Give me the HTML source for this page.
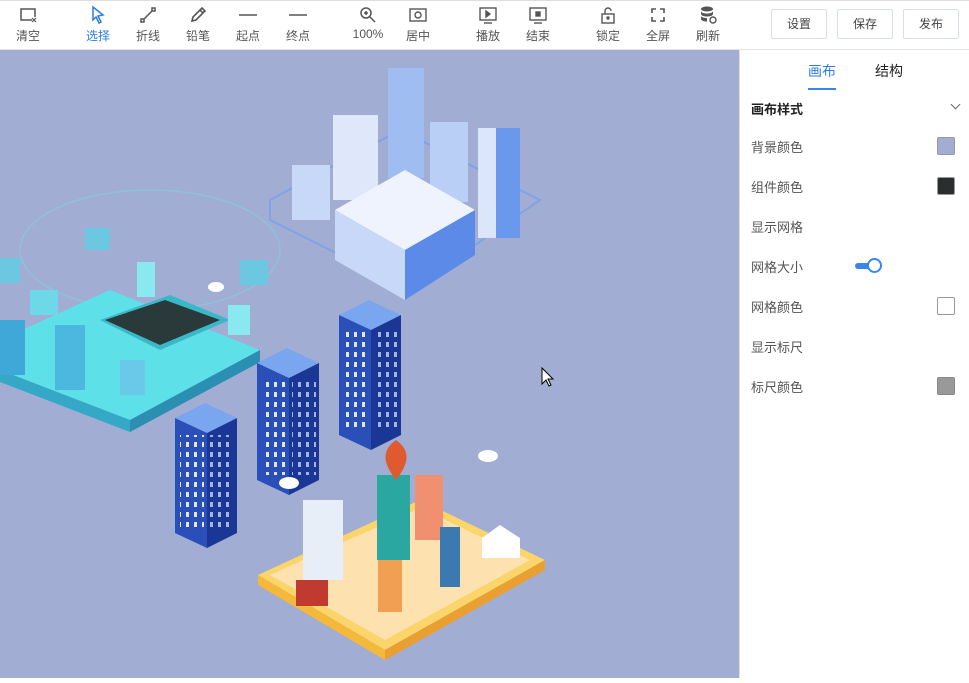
<!DOCTYPE html>
<html><head><meta charset="utf-8"><style>
*{margin:0;padding:0;box-sizing:border-box}
body{width:969px;height:678px;overflow:hidden;font-family:"Liberation Sans","Noto Sans CJK SC",sans-serif;background:#fff;position:relative}
.top{position:absolute;left:0;top:0;width:969px;height:50px;background:#fff;border-bottom:1px solid #e4e4e4;border-top:1px solid #ddd}
.tb{position:absolute;top:4px;width:50px;text-align:center;font-size:12px;color:#555}
.tb svg{display:block;margin:0 auto 2px;width:20px;height:20px}
.tb.act{color:#2b7de9}
.btn{position:absolute;top:8px;width:56px;height:30px;border:1px solid #d8dde6;border-radius:2px;font-size:12px;color:#444;text-align:center;line-height:28px}
.canvas{position:absolute;left:0;top:50px;width:739px;height:628px;background:#a2add3}
.panel{position:absolute;left:739px;top:50px;width:230px;height:628px;background:#fff;border-left:1px solid #e0e0e0}
.tab{position:absolute;top:11px;font-size:14px;color:#222}
.row{position:absolute;left:11px;font-size:13px;color:#555}
.sw{position:absolute;left:197px;width:18px;height:18px;border-radius:2px;border:1px solid #999}
</style></head><body>
<div class="top">
<div class="tb" style="left:3px"><svg viewBox="0 0 20 20" fill="none" stroke="#555" stroke-width="1.5"><path d="M14 15H3V4h14v8"/><path d="M14 13l4 4M18 13l-4 4" stroke-width="1.2"/></svg>清空</div>
<div class="tb act" style="left:73px"><svg viewBox="0 0 20 20" fill="none" stroke="#2b7de9" stroke-width="1.5"><path d="M5 2l10 8-5 1 3 6-2 1-3-6-3 3z"/></svg>选择</div>
<div class="tb" style="left:123px"><svg viewBox="0 0 20 20" fill="none" stroke="#555" stroke-width="1.5"><rect x="3" y="14" width="3" height="3"/><rect x="14" y="3" width="3" height="3"/><path d="M6 14l8-8"/></svg>折线</div>
<div class="tb" style="left:173px"><svg viewBox="0 0 20 20" fill="none" stroke="#555" stroke-width="1.6"><path d="M4 16l1-4 9-9 3 3-9 9z M12 5l3 3"/></svg>铅笔</div>
<div class="tb" style="left:223px"><svg viewBox="0 0 20 20" stroke="#555" stroke-width="1.5"><path d="M1 10h18"/></svg>起点</div>
<div class="tb" style="left:273px"><svg viewBox="0 0 20 20" stroke="#555" stroke-width="1.5"><path d="M1 10h18"/></svg>终点</div>
<div class="tb" style="left:343px"><svg viewBox="0 0 20 20" fill="none" stroke="#555" stroke-width="1.5"><circle cx="8" cy="8" r="5"/><path d="M12 12l5 5M6 8h4M8 6v4"/></svg>100%</div>
<div class="tb" style="left:393px"><svg viewBox="0 0 20 20" fill="none" stroke="#555" stroke-width="1.4"><rect x="2" y="4" width="16" height="12"/><circle cx="10" cy="10" r="3"/></svg>居中</div>
<div class="tb" style="left:463px"><svg viewBox="0 0 20 20" fill="none" stroke="#555" stroke-width="1.4"><rect x="2" y="3" width="16" height="12"/><path d="M8 6l4 3-4 3z" fill="#555"/><path d="M6 18h8"/></svg>播放</div>
<div class="tb" style="left:513px"><svg viewBox="0 0 20 20" fill="none" stroke="#555" stroke-width="1.4"><rect x="2" y="3" width="16" height="12"/><rect x="8" y="7" width="4" height="4" fill="#555"/><path d="M6 18h8"/></svg>结束</div>
<div class="tb" style="left:583px"><svg viewBox="0 0 20 20" fill="none" stroke="#555" stroke-width="1.4"><rect x="4" y="9" width="12" height="9"/><path d="M7 9V6a3 3 0 016 0"/><circle cx="10" cy="13" r="1" fill="#555"/></svg>锁定</div>
<div class="tb" style="left:633px"><svg viewBox="0 0 20 20" fill="none" stroke="#555" stroke-width="1.6"><path d="M4 8V4h4M12 4h4v4M16 12v4h-4M8 16H4v-4"/></svg>全屏</div>
<div class="tb" style="left:683px"><svg viewBox="0 0 20 20" fill="#555"><ellipse cx="9" cy="4" rx="6" ry="2.5"/><path d="M3 6v3c0 1.5 3 2.5 6 2.5s6-1 6-2.5V6c0 1.5-3 2.5-6 2.5S3 7.5 3 6zM3 11v3c0 1.5 3 2.5 6 2.5V13c-3 0-6-1-6-2z"/><circle cx="15" cy="15" r="3" fill="none" stroke="#555" stroke-width="1.4"/></svg>刷新</div>
<div class="btn" style="left:771px">设置</div>
<div class="btn" style="left:837px">保存</div>
<div class="btn" style="left:903px">发布</div>
</div>
<div class="canvas">
<svg width="739" height="628" viewBox="0 50 739 628">
<defs><pattern id="win" width="8" height="10" patternUnits="userSpaceOnUse"><rect x="2" y="2" width="3" height="5" fill="#dfe8ff"/></pattern></defs>
<ellipse cx="150" cy="250" rx="130" ry="60" fill="none" stroke="#7fd0e0" stroke-width="1.5" opacity=".6"/>
<polygon points="0,340 110,290 260,350 130,420 0,370" fill="#5de0e8"/>
<polygon points="0,370 130,420 130,432 0,382" fill="#35a8c8"/>
<polygon points="130,420 260,350 260,362 130,432" fill="#2a8fb0"/>
<polygon points="100,320 170,295 230,320 160,350" fill="#3ab8c8"/>
<polygon points="105,320 165,300 220,320 160,345" fill="#2a3a3a"/>
<rect x="0" y="320" width="25" height="55" fill="#3fa8d8"/>
<rect x="55" y="325" width="30" height="65" fill="#4cb8e0"/>
<rect x="120" y="360" width="25" height="35" fill="#6ac8e8"/>
<rect x="85" y="228" width="25" height="22" fill="#6cc8e0"/>
<rect x="240" y="260" width="28" height="25" fill="#6cc8e0"/>
<rect x="0" y="258" width="20" height="25" fill="#6cc8e0"/>
<rect x="137" y="262" width="18" height="35" fill="#8ae8f0"/>
<rect x="228" y="305" width="22" height="30" fill="#8ae8f0"/>
<rect x="30" y="290" width="28" height="25" fill="#6cd8e8"/>
<polygon points="270,200 400,130 540,200 410,290 270,220" fill="none" stroke="#6f9ef0" stroke-width="2" opacity=".7"/>
<rect x="388" y="68" width="36" height="110" fill="#9fbdf0"/>
<rect x="333" y="115" width="45" height="85" fill="#dfe8fb"/>
<rect x="430" y="122" width="38" height="80" fill="#b9cff5"/>
<rect x="478" y="128" width="42" height="110" fill="#dce6fb"/>
<rect x="496" y="128" width="24" height="110" fill="#6a98ec"/>
<rect x="292" y="165" width="38" height="55" fill="#c8d8f8"/>
<polygon points="335,210 405,170 475,210 405,250" fill="#eef3fd"/>
<polygon points="335,210 405,250 405,300 335,260" fill="#c8d8f8"/>
<polygon points="405,250 475,210 475,255 405,300" fill="#5b8ae8"/>
<g>
<polygon points="175,418 205,403 237,418 207,433" fill="#7aa6f0"/>
<polygon points="175,418 207,433 207,548 175,533" fill="#2a4fb8"/>
<polygon points="207,433 237,418 237,533 207,548" fill="#1a3795"/>
<rect x="180" y="435" width="24" height="95" fill="url(#win)"/>
<rect x="210" y="435" width="24" height="95" fill="url(#win)" opacity=".7"/>
<polygon points="257,363 287,348 319,363 289,378" fill="#7aa6f0"/>
<polygon points="257,363 289,378 289,495 257,480" fill="#2a4fb8"/>
<polygon points="289,378 319,363 319,480 289,495" fill="#1a3795"/>
<rect x="262" y="380" width="24" height="95" fill="url(#win)"/>
<rect x="292" y="380" width="24" height="95" fill="url(#win)" opacity=".7"/>
<polygon points="339,315 369,300 401,315 371,330" fill="#7aa6f0"/>
<polygon points="339,315 371,330 371,450 339,435" fill="#2a4fb8"/>
<polygon points="371,330 401,315 401,435 371,450" fill="#1a3795"/>
<rect x="344" y="332" width="24" height="95" fill="url(#win)"/>
<rect x="374" y="332" width="24" height="95" fill="url(#win)" opacity=".7"/>
</g>
<polygon points="258,575 420,500 545,560 385,650" fill="#fbd46a"/>
<polygon points="258,575 385,650 385,660 258,585" fill="#f4b83a"/>
<polygon points="385,650 545,560 545,570 385,660" fill="#e9a030"/>
<polygon points="270,575 420,508 530,560 385,640" fill="#fde2b0"/>
<rect x="303" y="500" width="40" height="80" fill="#e8eef8"/>
<rect x="377" y="475" width="33" height="85" fill="#2aa7a0"/>
<rect x="415" y="475" width="28" height="65" fill="#f09070"/>
<rect x="440" y="527" width="20" height="60" fill="#3a7ab0"/>
<rect x="378" y="560" width="24" height="52" fill="#f0a050"/>
<polygon points="482,538 500,525 520,538 520,558 482,558" fill="#fff"/>
<path d="M396 480c-14-18-14-30 0-40c14 10 14 22 0 40z" fill="#e05a30"/>
<rect x="296" y="580" width="32" height="26" fill="#c03a30"/>
<g fill="#fff"><ellipse cx="216" cy="287" rx="8" ry="5"/><ellipse cx="488" cy="456" rx="10" ry="6"/><ellipse cx="289" cy="483" rx="10" ry="6"/></g>
<path d="M542 368v16l4-4 3 6 2-1-3-6h5z" fill="#fff" stroke="#000" stroke-width="1"/>
</svg>
</div>
<div class="panel">
<div class="tab" style="left:68px;color:#2b7de9">画布</div>
<div style="position:absolute;left:68px;top:38px;width:28px;height:2px;background:#3a85ea"></div>
<div class="tab" style="left:135px">结构</div>
<div class="row" style="top:49px;font-weight:bold;color:#222">画布样式</div>
<div style="position:absolute;left:212px;top:51px;width:7px;height:7px;border-right:1px solid #666;border-bottom:1px solid #666;transform:rotate(45deg)"></div>
<div class="row" style="top:87px">背景颜色</div><div class="sw" style="top:87px;background:#a2add3"></div>
<div class="row" style="top:127px">组件颜色</div><div class="sw" style="top:127px;background:#2b2e2e"></div>
<div class="row" style="top:167px">显示网格</div>
<div class="row" style="top:207px">网格大小</div>
<div style="position:absolute;left:115px;top:213px;width:22px;height:6px;border-radius:3px;background:#3a85ea"></div>
<div style="position:absolute;left:127px;top:208px;width:15px;height:15px;border-radius:50%;background:#fff;border:2px solid #3a85ea"></div>
<div class="row" style="top:247px">网格颜色</div><div class="sw" style="top:247px;background:#fff"></div>
<div class="row" style="top:287px">显示标尺</div>
<div class="row" style="top:327px">标尺颜色</div><div class="sw" style="top:327px;background:#999;border-color:#888"></div>
</div>
</body></html>
